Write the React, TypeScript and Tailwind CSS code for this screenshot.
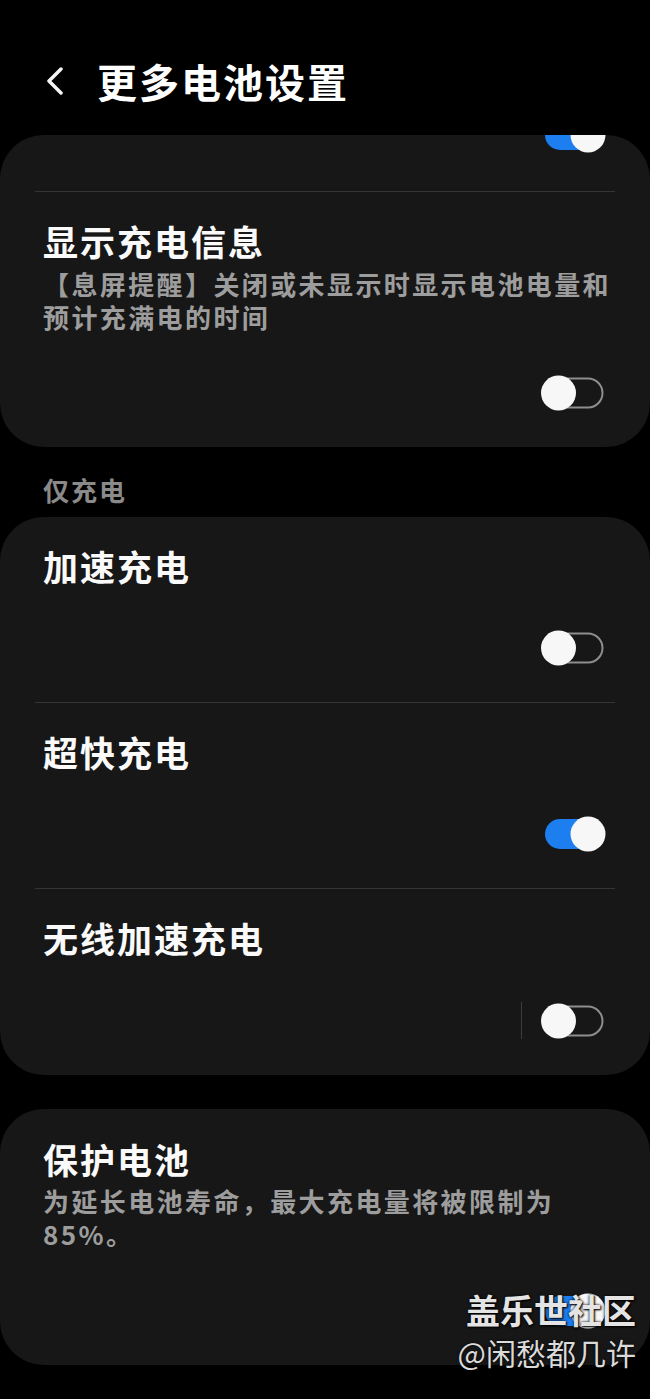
const cjk = { fontFamily: '"Noto Sans CJK SC", "Noto Sans", sans-serif' };

const Toggle = ({ on }: { on: boolean }) =>
	on ? (
		<svg width="66" height="36" viewBox="0 0 66 36">
			<rect x="5" y="3" width="58" height="30" rx="15" fill="#1d7ef0" />
			<circle cx="48" cy="18" r="17.5" fill="#f7f7f7" />
		</svg>
	) : (
		<svg width="66" height="36" viewBox="0 0 66 36">
			<rect x="7.5" y="3.5" width="55" height="29" rx="14.5" fill="none" stroke="#8e8e8e" strokeWidth="2" />
			<circle cx="18.5" cy="18" r="17.5" fill="#f7f7f7" />
		</svg>
	);

const Row = ({ title, sub, on, bar }: { title: string; sub?: string; on: boolean; bar?: boolean }) => (
	<div className="pt-[27px] pb-[36px]">
		<div className="px-[43px] text-[35px] leading-[44px] font-bold tracking-[2px] text-[#fafafa]">{title}</div>
		{sub && (
			<div className="mt-[4px] pl-[43px] pr-[35px] text-[26px] leading-[33px] font-bold tracking-[2.4px] text-[#9d9d9d]">{sub}</div>
		)}
		<div className="mt-[42px] flex items-center justify-end gap-[18px] pr-[44px]">
			{bar && <div className="h-[37px] w-px bg-[#3c3c3c]" />}
			<Toggle on={on} />
		</div>
	</div>
);

const Divider = () => <div className="mx-[35px] h-px bg-[#353535]" />;

export default function App() {
	return (
		<div className="relative min-h-[1399px] w-[650px] overflow-hidden bg-black pb-[40px]" style={cjk}>
			<header className="flex h-[135px] items-center pl-[44px] pt-[26px]">
				<svg width="22" height="28" viewBox="0 0 22 28" fill="none">
					<path d="M17 2 L5 14 L17 26" stroke="#f5f5f5" strokeWidth="3.5" strokeLinecap="round" strokeLinejoin="round" />
				</svg>
				<h1 className="ml-[31px] text-[40px] font-bold tracking-[2px] text-white">更多电池设置</h1>
			</header>

			<section className="overflow-hidden rounded-[44px] bg-[#171717]">
				<div className="flex h-[56px] justify-end pr-[44px]">
					<div className="-mt-[18px]">
						<Toggle on />
					</div>
				</div>
				<Divider />
				<Row title="显示充电信息" sub="【息屏提醒】关闭或未显示时显示电池电量和预计充满电的时间" on={false} />
			</section>

			<div className="mt-[26px] mb-[11px] px-[43px] text-[26px] leading-[33px] font-bold tracking-[2px] text-[#8a8a8a]">仅充电</div>

			<section className="overflow-hidden rounded-[44px] bg-[#171717]">
				<Row title="加速充电" on={false} />
				<Divider />
				<Row title="超快充电" on />
				<Divider />
				<Row title="无线加速充电" on={false} bar />
			</section>

			<section className="mt-[34px] overflow-hidden rounded-[44px] bg-[#171717]">
				<div className="pt-[28px] pb-[36px]">
					<div className="px-[43px] text-[35px] leading-[44px] font-bold tracking-[2px] text-[#fafafa]">保护电池</div>
					<div className="mt-[3px] pl-[43px] pr-[35px] text-[26px] leading-[33px] font-bold tracking-[2.4px] text-[#9d9d9d]">
						为延长电池寿命，最大充电量将被限制为85%。
					</div>
					<div className="mt-[43px] flex justify-end pr-[44px]">
						<Toggle on />
					</div>
				</div>
			</section>

			<div className="absolute top-[1288px] right-[14px] flex flex-col items-end">
				<div className="text-[34px] leading-[44px] font-bold text-[#e4e4e4] [text-shadow:0_0_3px_#000,1px_1px_2px_#000]">盖乐世社区</div>
				<div className="text-[30px] leading-[40px] text-[#dadada] [text-shadow:0_0_3px_#000]">@闲愁都几许</div>
			</div>
		</div>
	);
}
